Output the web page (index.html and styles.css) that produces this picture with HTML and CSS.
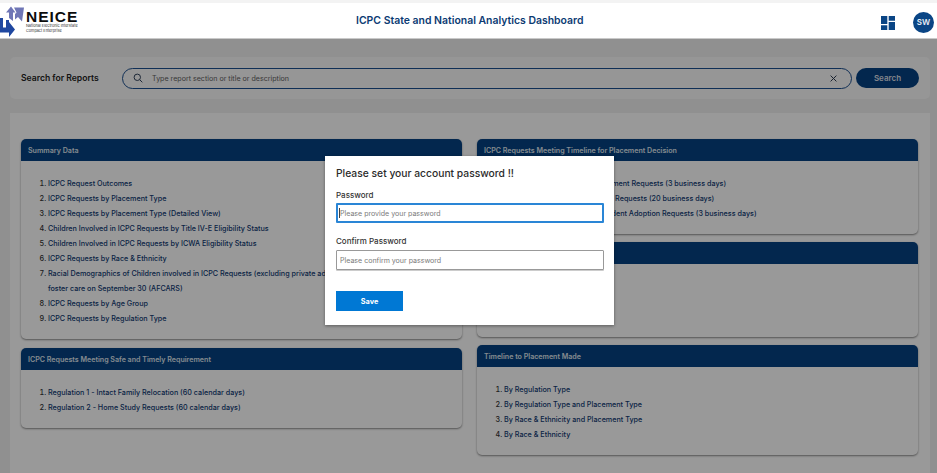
FILE: index.html
```html
<!DOCTYPE html>
<html lang="en">
<head>
<meta charset="utf-8">
<title>ICPC State and National Analytics Dashboard</title>
<link rel="stylesheet" href="styles.css">
</head>
<body>
<header class="topbar">
  <div class="logo">
    <svg class="logo-mark" width="26" height="36" viewBox="0 0 26 36" aria-hidden="true">
      <path fill="#6f76b6" d="M11 2.500L6 8.500h3V14l4 3V8.500h2.500z"/>
      <path fill="#6f76b6" d="M14 3.500h10l-2 14-4-4.500-3 2.500V10l1.500-1.500z"/>
      <path fill="#1f47a0" d="M0 14h3v9.500h3V16h3v7.500h0V18l6 7.500-6 7.500v-4.500H0z"/>
    </svg>
    <div class="logo-text">
      <div class="logo-name">NEICE</div>
      <div class="logo-sub">National Electronic Interstate<br>Compact Enterprise</div>
    </div>
  </div>
  <h1 class="app-title">ICPC State and National Analytics Dashboard</h1>
  <div class="top-actions">
    <svg class="dash-icon" width="14" height="14" viewBox="0 0 14 14" aria-hidden="true">
      <path fill="#0a4585" d="M0 0h6.300v8H0zM7.700 0H14v4.700H7.700zM7.700 6H14v8H7.700zM0 9.300h6.300V14H0z"/>
    </svg>
    <div class="avatar">SW</div>
  </div>
</header>

<section class="search-card">
  <div class="search-title">Search for Reports</div>
  <div class="search-field">
    <svg class="search-icon" width="10" height="10" viewBox="0 0 10 10" aria-hidden="true">
      <circle cx="4.300" cy="4.300" r="3.200" fill="none" stroke="#33445c" stroke-width="1"/>
      <path d="M6.700 6.700L9.300 9.300" stroke="#33445c" stroke-width="1"/>
    </svg>
    <span class="search-placeholder">Type report section or title or description</span>
    <svg class="clear-icon" width="7" height="7" viewBox="0 0 7 7" aria-hidden="true">
      <path d="M.6.600l5.800 5.800M6.400.600L.6 6.400" stroke="#2b3a4e" stroke-width="1"/>
    </svg>
  </div>
  <button class="search-btn" type="button">Search</button>
</section>

<main class="panel">
  <div class="column column-left">
    <article class="card">
      <h2 class="card-head">Summary Data</h2>
      <ol class="card-list">
        <li>ICPC Request Outcomes</li>
        <li>ICPC Requests by Placement Type</li>
        <li>ICPC Requests by Placement Type (Detailed View)</li>
        <li>Children Involved in ICPC Requests by Title IV-E Eligibility Status</li>
        <li>Children Involved in ICPC Requests by ICWA Eligibility Status</li>
        <li>ICPC Requests by Race &amp; Ethnicity</li>
        <li>Racial Demographics of Children involved in ICPC Requests (excluding private adoptions) compared to Children in foster care on September 30 (AFCARS)</li>
        <li>ICPC Requests by Age Group</li>
        <li>ICPC Requests by Regulation Type</li>
      </ol>
    </article>
    <article class="card">
      <h2 class="card-head">ICPC Requests Meeting Safe and Timely Requirement</h2>
      <ol class="card-list">
        <li>Regulation 1 - Intact Family Relocation (60 calendar days)</li>
        <li>Regulation 2 - Home Study Requests (60 calendar days)</li>
      </ol>
    </article>
  </div>
  <div class="column">
    <article class="card">
      <h2 class="card-head">ICPC Requests Meeting Timeline for Placement Decision</h2>
      <ol class="card-list">
        <li>Regulation 10 - Expedited Placement Requests (3 business days)</li>
        <li>Regulation 2 - Public Placement Requests (20 business days)</li>
        <li>Regulation 12 - Private/Independent Adoption Requests (3 business days)</li>
      </ol>
    </article>
    <article class="card">
      <h2 class="card-head"></h2>
      <ol class="card-list">
        <li>By Regulation Type</li>
        <li>By Placement Type</li>
        <li>By Race &amp; Ethnicity</li>
      </ol>
    </article>
    <article class="card">
      <h2 class="card-head">Timeline to Placement Made</h2>
      <ol class="card-list">
        <li>By Regulation Type</li>
        <li>By Regulation Type and Placement Type</li>
        <li>By Race &amp; Ethnicity and Placement Type</li>
        <li>By Race &amp; Ethnicity</li>
      </ol>
    </article>
  </div>
</main>

<div class="backdrop"></div>

<form class="modal">
  <h3 class="modal-title">Please set your account password !!</h3>
  <label class="field-label" for="pw">Password</label>
  <div class="field-wrap">
    <input class="field field-active" id="pw" type="password" placeholder="Please provide your password">
    <span class="caret"></span>
  </div>
  <label class="field-label field-label-second" for="pw2">Confirm Password</label>
  <input class="field" id="pw2" type="password" placeholder="Please confirm your password">
  <button class="save-btn" type="button">Save</button>
</form>
</body>
</html>
```

FILE: styles.css
```css
* { box-sizing: border-box; }
html, body { margin: 0; padding: 0; }
body {
  position: relative;
  width: 937px;
  height: 473px;
  overflow: hidden;
  background: #f0f0f0;
  font-family: Inter, "Liberation Sans", sans-serif;
}

/* header */
.topbar {
  position: relative;
  z-index: 3;
  height: 39px;
  display: flex;
  align-items: center;
  background: #fff;
  border-top: 3px solid #f3f3f3;
  border-bottom: 1px solid #c9c9c9;
}
.logo {
  position: absolute;
  left: 0;
  top: 1px;
  display: flex;
  align-items: flex-start;
}
.logo-mark { flex: none; }
.logo-text { margin-top: 7px; }
.logo-name {
  font-family: "Liberation Sans", sans-serif;
  font-weight: 700;
  font-size: 15.500px;
  line-height: 12px;
  letter-spacing: 1px;
  color: #0c0c0c;
}
.logo-sub {
  margin-top: 1px;
  font-size: 3.800px;
  line-height: 4.750px;
  color: #333;
  white-space: nowrap;
}
.app-title {
  margin: 0 0 0 356px;
  font-size: 10.450px;
  line-height: 14px;
  font-weight: 600;
  color: #0c3b73;
  white-space: nowrap;
}
.top-actions {
  position: absolute;
  left: 881px;
  top: 9px;
  display: flex;
  align-items: center;
  gap: 18px;
}
.dash-icon { display: block; }
.avatar {
  width: 21px;
  height: 21px;
  border-radius: 50%;
  background: #0a4585;
  color: #e9eef5;
  font-size: 8px;
  font-weight: 600;
  line-height: 21px;
  text-align: center;
}

/* search */
.search-card {
  height: 42px;
  margin: 18px 7px 0 10px;
  padding: 0 11px;
  display: flex;
  align-items: center;
  background: #fafafa;
  border-radius: 5px;
}
.search-title {
  width: 101px;
  flex: none;
  font-size: 8.600px;
  font-weight: 600;
  color: #222;
  white-space: nowrap;
}
.search-field {
  width: 730px;
  height: 21px;
  flex: none;
  padding: 0 14px 0 10px;
  display: flex;
  align-items: center;
  border: 1px solid #1c4f8f;
  border-radius: 11px;
  background: #fafafa;
}
.search-icon { flex: none; margin-right: 9px; }
.search-placeholder {
  flex: 1;
  font-size: 7.100px;
  color: #5f5f5f;
}
.clear-icon { flex: none; }
.search-btn {
  width: 63px;
  height: 20px;
  flex: none;
  margin-left: 4px;
  padding: 0;
  border: 0;
  border-radius: 10px;
  background: #054182;
  color: #d9dee6;
  font-family: inherit;
  font-size: 8px;
  font-weight: 600;
}

/* panel */
.panel {
  margin: 14px 7px 0 10px;
  padding: 26px 11px 0;
  height: 360px;
  display: flex;
  gap: 15px;
  align-items: flex-start;
  background: #fff;
}
.column {
  width: 441px;
  flex: none;
  display: flex;
  flex-direction: column;
  gap: 8px;
}
.column-left { gap: 9px; }
.card {
  border-radius: 5px;
  background: #fff;
  box-shadow: 0 1px 2px rgba(0, 0, 0, .45);
}
.card-head {
  margin: 0;
  height: 22px;
  padding: 0 7px;
  border-radius: 5px 5px 0 0;
  background: #054182;
  color: #dfe5ee;
  font-size: 7.100px;
  font-weight: 600;
  line-height: 23px;
  white-space: nowrap;
}
.card-list {
  margin: 0;
  padding: 15px 10px 13px 27px;
  font-size: 7.200px;
  font-weight: 500;
  line-height: 15px;
}
.card-list li { color: #0f3a73; }
.card-list li::marker { color: #333; }

/* dimming layer */
.backdrop {
  position: absolute;
  left: 0;
  right: 0;
  top: 39px;
  bottom: 0;
  z-index: 2;
  background: rgba(0, 0, 0, .4);
}

/* dialog */
.modal {
  position: absolute;
  z-index: 4;
  left: 325px;
  top: 156px;
  width: 289px;
  height: 169px;
  padding: 11px 11px 0;
  background: #fff;
  box-shadow: 0 1px 3px rgba(0, 0, 0, .4);
}
.modal-title {
  margin: 0 0 10px;
  font-size: 10.300px;
  line-height: 13px;
  font-weight: 500;
  color: #2b2b2b;
}
.field-label {
  display: block;
  margin-bottom: 3px;
  font-size: 8px;
  line-height: 10px;
  color: #333;
  font-weight: 500;
}
.field-label-second { margin-top: 13px; margin-bottom: 4px; }
.field-wrap { position: relative; }
.field {
  display: block;
  width: 268px;
  height: 20px;
  padding: 0 3px;
  border: 1px solid #999;
  border-radius: 1px;
  background: #fff;
  box-shadow: 0 1px 0 #ccc;
  font-family: inherit;
  font-size: 7.050px;
  outline: none;
}
.field::placeholder { color: #7a7a7a; opacity: 1; }
.field-active { border: 2px solid #2a86d6; padding-left: 2px; box-shadow: none; }
.caret {
  position: absolute;
  left: 3px;
  top: 5px;
  width: 1px;
  height: 10px;
  background: #444;
}
.save-btn {
  display: block;
  width: 67px;
  height: 20px;
  margin-top: 21px;
  padding: 0;
  border: 0;
  background: #0078d4;
  color: #fff;
  font-family: inherit;
  font-size: 7.300px;
  font-weight: 700;
}
```
